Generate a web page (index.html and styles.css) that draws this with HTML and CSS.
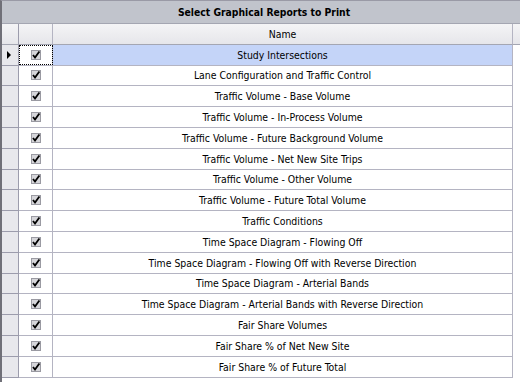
FILE: index.html
```html
<!DOCTYPE html>
<html lang="en">
<head>
    <meta charset="UTF-8">
    <title>Select Graphical Reports to Print</title>
    <link rel="stylesheet" href="styles.css">
</head>
<body>
    <div class="grid">
        <div class="title">Select Graphical Reports to Print</div>

        <div class="row head">
            <div class="cell rowhead"></div>
            <div class="cell check"></div>
            <div class="cell name">Name</div>
            <div class="cell filler"></div>
        </div>

        <div class="row selected">
            <div class="cell rowhead"><span class="arrow"></span></div>
            <div class="cell check"><span class="focus"><svg class="box" viewBox="0 0 10 10"><rect x="0.5" y="0.5" width="9" height="9" fill="#d6d6da" stroke="#9a9aa2"/><path d="M2 5 L4 7.6 L8.4 1.4" fill="none" stroke="#000" stroke-width="1.8"/></svg></span></div>
            <div class="cell name">Study Intersections</div>
            <div class="cell filler"></div>
        </div>

        <div id="rows"></div>
    </div>

    <script>
        const reports = [
            'Lane Configuration and Traffic Control',
            'Traffic Volume - Base Volume',
            'Traffic Volume - In-Process Volume',
            'Traffic Volume - Future Background Volume',
            'Traffic Volume - Net New Site Trips',
            'Traffic Volume - Other Volume',
            'Traffic Volume - Future Total Volume',
            'Traffic Conditions',
            'Time Space Diagram - Flowing Off',
            'Time Space Diagram - Flowing Off with Reverse Direction',
            'Time Space Diagram - Arterial Bands',
            'Time Space Diagram - Arterial Bands with Reverse Direction',
            'Fair Share Volumes',
            'Fair Share % of Net New Site',
            'Fair Share % of Future Total'
        ];
        const box = '<svg class="box" viewBox="0 0 10 10"><rect x="0.5" y="0.5" width="9" height="9" fill="#d6d6da" stroke="#9a9aa2"/><path d="M2 5 L4 7.6 L8.4 1.4" fill="none" stroke="#000" stroke-width="1.8"/></svg>';
        const rows = document.getElementById('rows');
        reports.forEach(function (name) {
            const row = document.createElement('div');
            row.className = 'row';
            row.innerHTML = '<div class="cell rowhead"></div>' +
                '<div class="cell check">' + box + '</div>' +
                '<div class="cell name">' + name + '</div>' +
                '<div class="cell filler"></div>';
            rows.appendChild(row);
        });
    </script>
</body>
</html>
```

FILE: styles.css
```css
body {
    margin: 0;
    background: #fff;
    font-family: "DejaVu Sans", Verdana, sans-serif;
    font-stretch: condensed;
    color: #000;
}

.grid {
    width: 518px;
    height: 381px;
    border-left: 2px solid #707078;
    border-top: 1px solid #9a9aa6;
    background: #fff;
}

.title {
    height: 22px;
    line-height: 22px;
    background: #c1c4cc;
    border-bottom: 1px solid #a4a6b2;
    text-align: center;
    font-weight: bold;
    font-size: 10.3px;
    padding-left: 6px;
}

.row {
    display: flex;
    height: 20.8px;
}

.cell {
    box-sizing: border-box;
    height: 100%;
    display: flex;
    align-items: center;
    justify-content: center;
    border-bottom: 1px solid #b4b4c2;
    border-right: 1px solid #b4b4c2;
    font-size: 10.4px;
}

.rowhead {
    width: 17px;
    background: #e8e8ec;
    border-color: #9c9cac;
}

.check {
    width: 34px;
}

.name {
    width: 460px;
}

.filler {
    flex: 1;
    border: none;
}

.head .cell {
    background: linear-gradient(#f4f4f6, #e6e6ea);
    border-bottom-color: #a4a6b2;
}

.head .filler {
    border-bottom: 1px solid #a4a6b2;
}

.selected .name {
    background: #c4d4f8;
}

.arrow {
    width: 0;
    height: 0;
    border-top: 4px solid transparent;
    border-bottom: 4px solid transparent;
    border-left: 4px solid #000;
    margin-left: -3px;
}

.focus {
    box-sizing: border-box;
    width: 34px;
    height: 20px;
    margin: 0 -1px 0 0;
    border: 1px dotted #000;
    display: flex;
    align-items: center;
    justify-content: center;
}

.box {
    width: 10px;
    height: 10px;
    display: block;
}
```
